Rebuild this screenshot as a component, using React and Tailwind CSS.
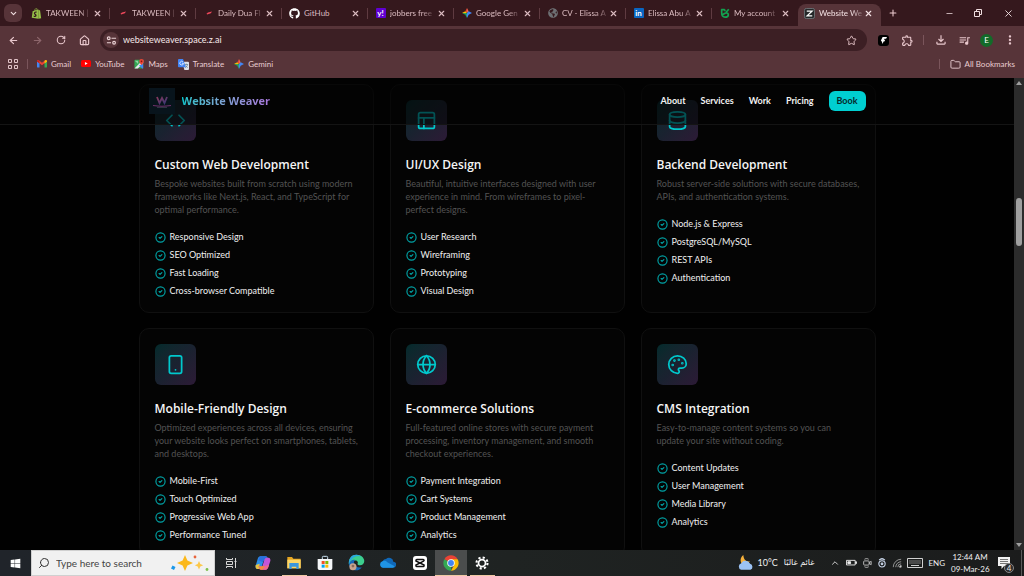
import {
  ArrowLeft,
  ArrowRight,
  ChevronDown,
  ChevronUp,
  CircleCheck,
  Code,
  Database,
  Folder,
  Globe,
  House,
  Minus,
  Palette,
  PanelsTopLeft,
  Plus,
  RotateCw,
  Search,
  Smartphone,
  Star,
  X,
} from 'lucide-react';
import { FaGithub, FaGlobeAmericas, FaShopify, FaWindows } from 'react-icons/fa';
import { MdOutlineExtension, MdOutlineFileDownload, MdOutlineQueueMusic, MdMoreVert } from 'react-icons/md';

/* ---------- small drawings ---------- */

const GeminiIcon = () => (
  <svg viewBox="0 0 24 24" className="size-[10px]">
    <path d="M12 0 8 8l4 4z" fill="#ea4335" />
    <path d="M12 0l4 8-4 4z" fill="#f0644c" />
    <path d="M0 12l8-4 4 4z" fill="#fbbc04" />
    <path d="M0 12l8 4 4-4z" fill="#34a853" />
    <path d="M12 24l-4-8 4-4z" fill="#1fa87a" />
    <path d="M12 24l4-8-4-4zM24 12l-8-4-4 4 4 4z" fill="#4285f4" />
  </svg>
);

const DashIcon = () => (
  <svg viewBox="0 0 10 10" className="size-[10px]">
    <path d="M2.500 5.800 4 4.400l4-.8-1.200 1.600-3.600 1.200z" fill="#f0485c" />
  </svg>
);

const AccountIcon = () => (
  <svg viewBox="0 0 24 24" className="size-[10px]" fill="none" stroke="#12a150" strokeWidth="4">
    <path d="M3 4h7l3 3M4 3v8c0 7 3 11 8 11 5 0 8-3 8-6s-3-5-6-4-5 3-8 4M14 11l7-8" />
  </svg>
);

const WeaverTabIcon = () => (
  <svg viewBox="0 0 12 12" className="size-[11px]">
    <rect x=".5" y=".5" width="11" height="11" rx="2" fill="#242829" stroke="#6f7578" />
    <path d="M3 3.400h5.800L3.400 8.600H9" stroke="#fff" strokeWidth="1.400" fill="none" />
  </svg>
);

const YahooIcon = () => (
  <span className="flex size-[10px] items-center justify-center rounded-[1px] bg-[#6001d2] text-[8px] leading-none font-bold text-white">
    y!
  </span>
);

const LinkedInIcon = () => (
  <span className="flex size-[10px] items-center justify-center rounded-[1px] bg-[#0a66c2] text-[8px] leading-none font-bold text-white">
    in
  </span>
);

const GmailIcon = () => (
  <svg viewBox="0 0 24 18" className="w-[10px]">
    <path d="M0 3v13a2 2 0 0 0 2 2h4V7z" fill="#4285f4" />
    <path d="M24 3v13a2 2 0 0 1-2 2h-4V7z" fill="#34a853" />
    <path d="M0 3c0-3 3-4 5-2l7 5.500 7-5.500c2-2 5-1 5 2l-6 5-6 4.500L6 8z" fill="#ea4335" />
    <path d="M18 2l1-1c2-2 5-1 5 2v1l-6 4.500z" fill="#fbbc04" />
    <path d="M0 3c0-1 1-3 2.500-3L6 2v6L0 4z" fill="#c5221f" />
  </svg>
);

const YouTubeIcon = () => (
  <svg viewBox="0 0 24 17" className="w-[10px]">
    <rect width="24" height="17" rx="4" fill="#f00" />
    <path d="m9.500 5 6.500 3.500L9.500 12z" fill="#fff" />
  </svg>
);

const MapsIcon = () => (
  <svg viewBox="0 0 24 24" className="size-[10px]">
    <rect x="1" y="2" width="21" height="21" rx="2" fill="#34a853" />
    <path d="M1 23 22 2v8L9 23z" fill="#e8eaed" />
    <path d="M12 15l8 8h2V12z" fill="#4285f4" />
    <path d="M2 4h8v8z" fill="#8fd3a4" />
    <path d="M18 0a5.500 5.500 0 0 0-5.500 5.500c0 4 5.500 9 5.500 9s5.500-5 5.500-9A5.500 5.500 0 0 0 18 0z" fill="#ea4335" />
    <circle cx="18" cy="5.500" r="2" fill="#811411" />
  </svg>
);

const TranslateIcon = () => (
  <svg viewBox="0 0 24 24" className="size-[11px]">
    <path d="M9 6h13a2 2 0 0 1 2 2v14a2 2 0 0 1-2 2h-8z" fill="#dfe3ea" />
    <path d="M14 12h8M18 10v2M21 12c-1 4-3 6-6 7M16 14l5 5" stroke="#607d8b" strokeWidth="1.500" fill="none" />
    <path d="M2 0h9l6 18H2a2 2 0 0 1-2-2V2a2 2 0 0 1 2-2z" fill="#4285f4" />
    <path d="M11 6.500A4 4 0 1 0 12 9.500H8.500" stroke="#fff" strokeWidth="1.600" fill="none" />
  </svg>
);

const AppsIcon = () => (
  <svg viewBox="0 0 10 10" className="size-[10px]" fill="none" stroke="#e0c3c7">
    <path d="M.5.5h3v3h-3zM6.500.5h3v3h-3zM.5 6.500h3v3h-3zM6.500 6.500h3v3h-3z" />
  </svg>
);

const TuneIcon = () => (
  <svg viewBox="0 0 12 12" className="size-[11px]" fill="none" stroke="#ead2d5" strokeWidth="1.200">
    <circle cx="3" cy="3.500" r="1.500" />
    <path d="M6 3.500h5M1 8.500h4.500" />
    <circle cx="8.800" cy="8.500" r="1.500" />
  </svg>
);

const RestoreIcon = () => (
  <svg viewBox="0 0 8 8" className="size-[8px]" fill="none" stroke="#f1dfe1">
    <path d="M.5 2.500h5v5h-5zM2.500 2V.500h5v5H6" />
  </svg>
);

const WeaverLogo = () => (
  <svg viewBox="0 0 26 26" className="size-[26px]">
    <defs>
      <linearGradient id="logoW" x1="0" y1="0" x2="1" y2="1">
        <stop offset="0" stopColor="#8a3a5c" />
        <stop offset="1" stopColor="#3b3675" />
      </linearGradient>
    </defs>
    <rect width="26" height="26" fill="#08141c" />
    <path d="M8 9l2.500 6 2.500-5 2.500 5L18 9" stroke="url(#logoW)" strokeWidth="1.800" fill="none" />
    <path d="M4 17.500c6 1 12 1 18 0" stroke="#70316b" strokeWidth="1.200" fill="none" />
    <path d="M8 19.500h10" stroke="#3a3d4d" strokeWidth=".8" />
  </svg>
);

const SparklesArt = () => (
  <svg viewBox="0 0 40 20" className="h-[20px] w-[40px]">
    <path d="M15 2l2.400 5.600L23 10l-5.600 2.400L15 18l-2.400-5.600L7 10l5.600-2.400z" fill="#fbb81c" />
    <path d="M29 8l1.300 2.900 2.900 1.300-2.900 1.300L29 16.400l-1.300-2.900-2.900-1.300 2.900-1.300z" fill="#fcc84a" />
    <path d="M2.500 12.500l3 1.500-1.500 3-3-1.500z" fill="#1b97e8" />
    <circle cx="25" cy="4" r="1.400" fill="#e8643c" />
    <circle cx="37" cy="16.500" r="1.400" fill="#7cc04b" />
  </svg>
);

const TaskViewIcon = () => (
  <svg viewBox="0 0 12 12" className="size-[12px]" fill="none" stroke="#d8d8d8">
    <path d="M1.500 1v1.500h6V1M1.500 4.500h6v3h-6zM1.500 11V9.500h6V11M10.500 1v10M9.500 4.500h2" />
  </svg>
);

const CopilotIcon = () => (
  <svg viewBox="0 0 24 24" className="size-[16px]">
    <path d="M8 2h8c2 0 2.500 1.500 3 3l1 3h-7l-3 10c-.6 2-1.500 3-3.500 3H4c-3 0-3.500-3-3-5L4 6c.6-2 2-4 4-4z" fill="#2a8fe8" />
    <path d="M5 8c1-4 2-6 4-6h7c2 0 2.500 1.500 3 3l1 3h-7l-1 3z" fill="#2b6fe0" />
    <path d="M1 15l6-2-1 8H4c-3 0-3.500-3-3-6z" fill="#e8c440" />
    <path d="M16 22H9c-2 0-2.500-1.500-3-3l-1-2h6l3-9.500C14.600 5.500 15.500 4 17.500 4H20c3 0 3.500 3 3 5l-3 9c-.6 2-2 4-4 4z" fill="#c455d8" />
    <path d="M5 17h6l4-1-3 6H9c-2 0-2.500-1.500-3-3z" fill="#f58a3c" />
    <path d="M12 22l3-6 6-1-1 3c-.6 2-2 4-4 4z" fill="#f0688c" />
  </svg>
);

const ExplorerIcon = () => (
  <svg viewBox="0 0 24 24" className="size-[16px]">
    <path d="M2 3h7l2 2.500h11V20H2z" fill="#e6a520" />
    <path d="M2 7h20v13H2z" fill="#fcd667" />
    <path d="M5 12h14v9h-3.500v-3.500h-7V21H5z" fill="#3a96dd" />
  </svg>
);

const StoreIcon = () => (
  <svg viewBox="0 0 24 24" className="size-[16px]">
    <path d="M8 6V3.500C8 2.500 8.500 2 9.500 2h5c1 0 1.500.5 1.500 1.500V6" fill="none" stroke="#cfe6f7" strokeWidth="1.500" />
    <path d="M1 6h22v14a2.500 2.500 0 0 1-2.500 2.500h-17A2.500 2.500 0 0 1 1 20z" fill="#f4f6f8" />
    <path d="M7 9h4.500v4.500H7z" fill="#f25022" />
    <path d="M12.500 9H17v4.500h-4.500z" fill="#7fba00" />
    <path d="M7 14.500h4.500V19H7z" fill="#00a4ef" />
    <path d="M12.500 14.500H17V19h-4.500z" fill="#ffb900" />
  </svg>
);

const EdgeIcon = () => (
  <svg viewBox="0 0 24 24" className="size-[17px]">
    <path d="M12 1c6 0 11 4 11 9 0 4-3 6-6 6-2.500 0-4-1-3.500-2.500 1-1.500.5-4.500-3.500-4.500-5 0-8 4-8.500 7C0 8 4 1 12 1z" fill="#3ccf8e" />
    <path d="M12 1c3 0 5 1 7 3-6-3-15 0-17.500 12C0 8 4 1 12 1z" fill="#2aa8e0" />
    <path d="M1.500 14C3 9 7 7.500 10 8.500c-3 2-3 12 9.500 10.500C17 22 14 23 12 23 6 23 1.500 19 1.500 14z" fill="#1668b8" />
    <circle cx="7" cy="18" r="5" fill="#c9a38e" />
    <circle cx="7" cy="17" r="2" fill="#8a6a5c" />
  </svg>
);

const OneDriveIcon = () => (
  <svg viewBox="0 0 24 16" className="w-[16px]">
    <path d="M9 3a6.500 6.500 0 0 1 11 4 4.500 4.500 0 0 1-.5 9H5A5 5 0 0 1 4 6.200 6 6 0 0 1 9 3z" fill="#1068b8" />
    <path d="M4 6.200c3-1 5 0 7 1.500L22 14a4 4 0 0 1-2.500 2H5A5 5 0 0 1 4 6.200z" fill="#1f93e4" />
  </svg>
);

const CapCutIcon = () => (
  <svg viewBox="0 0 24 24" className="size-[14px]">
    <rect width="24" height="24" rx="5" fill="#fff" />
    <path d="M19 8.500V7.500A1.500 1.500 0 0 0 17.500 6h-11A1.500 1.500 0 0 0 5 7.500v1l14 7v1a1.500 1.500 0 0 1-1.500 1.500h-11A1.500 1.500 0 0 1 5 16.500v-1l14-7" fill="none" stroke="#111" strokeWidth="2.400" />
  </svg>
);

const ChromeIcon = () => (
  <svg viewBox="0 0 24 24" className="size-[16px]">
    <path d="M12 12 2.050 6.250A11.500 11.500 0 0 1 21.950 6.250z" fill="#ea4335" />
    <path d="M2.050 6.250h0L12 12v11.500A11.500 11.500 0 0 1 2.050 6.250z" fill="#34a853" />
    <path d="M12 23.500 17 14.500 12 6.250h9.950A11.500 11.500 0 0 1 12 23.500z" fill="#fbbc05" />
    <circle cx="12" cy="12" r="5.600" fill="#fff" />
    <circle cx="12" cy="12" r="4.400" fill="#4285f4" />
  </svg>
);

const GearIcon = () => (
  <svg viewBox="0 0 24 24" className="size-[14px]" fill="none" stroke="#fff">
    <circle cx="12" cy="12" r="6" strokeWidth="3" />
    <circle cx="12" cy="12" r="9.500" strokeWidth="3.500" strokeDasharray="3.730 3.730" />
  </svg>
);

const WeatherIcon = () => (
  <svg viewBox="0 0 24 22" className="w-[17px]">
    <path d="M9 0c0 6 4 10 9 9-2 4-6 6-10 4S4 3 9 0z" fill="#f6b13c" />
    <path d="M6 21a5 5 0 0 1 0-9.500 7 7 0 0 1 12.500 1A4.500 4.500 0 0 1 19 21z" fill="#9cc3f5" />
  </svg>
);

const BatteryIcon = () => (
  <svg viewBox="0 0 12 8" className="w-[11px]">
    <path d="M.5 1.500h9.500v5H.500zM10.500 3h1v2h-1z" fill="none" stroke="#eee" />
    <path d="M2 3h3v2H2z" fill="#eee" stroke="#eee" />
  </svg>
);

const MeetNowIcon = () => (
  <svg viewBox="0 0 12 12" className="w-[10px]" fill="none" stroke="#d4d4d4">
    <path d="M3 1.500c1.500-1 3.500-1 5 0M3 10.500c1.500 1 3.500 1 5 0" />
    <rect x="2" y="3.500" width="6.500" height="5" rx="1" />
    <path d="M8.500 5.500 11 4v4L8.500 6.500" />
  </svg>
);

const HotspotIcon = () => (
  <svg viewBox="0 0 12 12" className="w-[10px]" fill="none" stroke="#cfdcf0" strokeWidth="1.300">
    <circle cx="6" cy="7" r="3.800" />
    <circle cx="6" cy="7" r="1" />
    <path d="M2.500 2.500C4.500.500 7.500.500 9.500 2.500" />
  </svg>
);

const WifiIcon = () => (
  <svg viewBox="0 0 12 12" className="w-[10px]" fill="none" stroke="#a9a9a9">
    <path d="M1.500 11A9.500 9.500 0 0 1 11 1.500M4.500 11A6.500 6.500 0 0 1 11 4.500M7 11a4 4 0 0 1 4-4" />
    <path d="M9 11a2 2 0 0 1 2-2v2z" fill="#fff" />
  </svg>
);

const KeyboardIcon = () => (
  <svg viewBox="0 0 16 10" className="w-[16px]" fill="none" stroke="#d0d0d0">
    <path d="M.5.500h15v9H.500z" />
    <path d="M2.500 3h11M2.500 5h11" strokeDasharray="1 1" />
    <path d="M4 7.500h8" />
  </svg>
);

const NoticeIcon = () => (
  <svg viewBox="0 0 12 12" className="w-[12px]">
    <path d="M0 0h12v9H6l-2.500 3V9H0z" fill="#f2f2f2" />
    <path d="M2 2.500h8M2 4.500h8M2 6.500h8" stroke="#555" strokeWidth=".8" />
  </svg>
);

/* ---------- data ---------- */

const tabs = [
  { title: 'TAKWEEN |', icon: <FaShopify className="size-[11px] text-[#95bf47]" /> },
  { title: 'TAKWEEN |', icon: <DashIcon /> },
  { title: 'Daily Dua Fl', icon: <DashIcon /> },
  { title: 'GitHub', icon: <FaGithub className="size-[11px] text-white" />, short: true },
  { title: 'jobbers free', icon: <YahooIcon /> },
  { title: 'Google Gen', icon: <GeminiIcon /> },
  { title: 'CV - Elissa A', icon: <FaGlobeAmericas className="size-[10px] text-[#6d6f73]" /> },
  { title: 'Elissa Abu A', icon: <LinkedInIcon /> },
  { title: 'My account', icon: <AccountIcon /> },
  { title: 'Website We', icon: <WeaverTabIcon />, active: true },
];

const bookmarks = [
  { name: 'Gmail', icon: <GmailIcon /> },
  { name: 'YouTube', icon: <YouTubeIcon /> },
  { name: 'Maps', icon: <MapsIcon /> },
  { name: 'Translate', icon: <TranslateIcon /> },
  { name: 'Gemini', icon: <GeminiIcon /> },
];

const services = [
  {
    title: 'Custom Web Development',
    icon: Code,
    text: 'Bespoke websites built from scratch using modern frameworks like Next.js, React, and TypeScript for optimal performance.',
    features: ['Responsive Design', 'SEO Optimized', 'Fast Loading', 'Cross-browser Compatible'],
  },
  {
    title: 'UI/UX Design',
    icon: PanelsTopLeft,
    text: 'Beautiful, intuitive interfaces designed with user experience in mind. From wireframes to pixel-perfect designs.',
    features: ['User Research', 'Wireframing', 'Prototyping', 'Visual Design'],
  },
  {
    title: 'Backend Development',
    icon: Database,
    text: 'Robust server-side solutions with secure databases, APIs, and authentication systems.',
    features: ['Node.js & Express', 'PostgreSQL/MySQL', 'REST APIs', 'Authentication'],
  },
  {
    title: 'Mobile-Friendly Design',
    icon: Smartphone,
    text: 'Optimized experiences across all devices, ensuring your website looks perfect on smartphones, tablets, and desktops.',
    features: ['Mobile-First', 'Touch Optimized', 'Progressive Web App', 'Performance Tuned'],
  },
  {
    title: 'E-commerce Solutions',
    icon: Globe,
    text: 'Full-featured online stores with secure payment processing, inventory management, and smooth checkout experiences.',
    features: ['Payment Integration', 'Cart Systems', 'Product Management', 'Analytics'],
  },
  {
    title: 'CMS Integration',
    icon: Palette,
    text: 'Easy-to-manage content systems so you can update your site without coding.',
    features: ['Content Updates', 'User Management', 'Media Library', 'Analytics'],
  },
];

const pinned = [
  { name: 'Copilot', icon: <CopilotIcon /> },
  { name: 'File Explorer', icon: <ExplorerIcon />, open: true },
  { name: 'Store', icon: <StoreIcon /> },
  { name: 'Edge', icon: <EdgeIcon /> },
  { name: 'OneDrive', icon: <OneDriveIcon /> },
  { name: 'CapCut', icon: <CapCutIcon /> },
  { name: 'Chrome', icon: <ChromeIcon />, open: true, active: true },
  { name: 'Settings', icon: <GearIcon />, open: true },
];

/* ---------- browser ---------- */

const Tab = ({ tab, separator }) => (
  <div
    className={
      tab.active
        ? 'mt-1 flex h-[22px] w-[83px] items-center rounded-t-lg bg-[#573439] pb-1 pl-[6px] text-[#f6e4e6]'
        : 'flex h-[26px] w-[86px] items-center pl-[7px] text-[#dcbcc1]'
    }
  >
    <button type="button" className="flex min-w-0 flex-1 items-center gap-1">
      <span className="flex w-[11px] shrink-0 justify-center">{tab.icon}</span>
      <span
        className={`text-left text-[8px] leading-3 whitespace-nowrap ${tab.short ? '' : '[mask-image:linear-gradient(to_right,black_75%,#0004)]'}`}
      >
        {tab.title}
      </span>
    </button>
    <button type="button" aria-label={`Close ${tab.title}`} className="mr-[7px]">
      <X className="size-[9px]" strokeWidth={3} />
    </button>
    {separator ? <span className="h-[11px] w-px bg-[#5f3b41]" /> : <span className="w-px" />}
  </div>
);

const TabStrip = () => (
  <div className="flex h-[26px] shrink-0 items-center bg-[#35181d]">
    <button
      type="button"
      aria-label="Search tabs"
      className="ml-1 flex h-[18px] w-[18px] shrink-0 items-center justify-center rounded-md bg-[#573439]"
    >
      <ChevronDown className="size-[9px] text-[#f1dfe1]" strokeWidth={3} />
    </button>
    <div className="ml-[2px] flex">
      {tabs.map((tab, i) => (
        <Tab key={i} tab={tab} separator={i < 8} />
      ))}
    </div>
    <button type="button" aria-label="New tab" className="ml-[7px]">
      <Plus className="size-[10px] text-[#f0cdd2]" strokeWidth={2.5} />
    </button>
    <div className="ml-auto flex w-[89px] items-center justify-around text-[#f1dfe1]">
      <button type="button" aria-label="Minimize">
        <Minus className="size-[9px]" />
      </button>
      <button type="button" aria-label="Restore">
        <RestoreIcon />
      </button>
      <button type="button" aria-label="Close">
        <X className="size-[11px]" />
      </button>
    </div>
  </div>
);

const Toolbar = () => (
  <div className="flex h-[28px] shrink-0 items-center bg-[#573439] text-[#e9c8cd]">
    <div className="flex w-[96px] shrink-0 items-center justify-around pl-[2px]">
      <button type="button" aria-label="Back">
        <ArrowLeft className="size-[11px]" strokeWidth={2.5} />
      </button>
      <button type="button" aria-label="Forward" disabled>
        <ArrowRight className="size-[11px] text-[#8d666c]" strokeWidth={2.5} />
      </button>
      <button type="button" aria-label="Reload">
        <RotateCw className="size-[10px]" strokeWidth={2.5} />
      </button>
      <button type="button" aria-label="Home">
        <House className="size-[11px]" strokeWidth={2.5} />
      </button>
    </div>
    <div className="ml-1 flex h-[22px] flex-1 items-center rounded-full bg-[#3c1f24] pr-[10px] pl-[3px]">
      <button
        type="button"
        aria-label="Site information"
        className="flex size-4 shrink-0 items-center justify-center rounded-full bg-[#573439]"
      >
        <TuneIcon />
      </button>
      <input
        aria-label="Address"
        defaultValue="websiteweaver.space.z.ai"
        className="ml-1 min-w-0 flex-1 bg-transparent text-[9px] text-[#f6e9ea] outline-none"
      />
      <button type="button" aria-label="Bookmark this page">
        <Star className="size-[11px]" />
      </button>
    </div>
    <div className="flex w-[157px] shrink-0 items-center pl-[11px]">
      <button
        type="button"
        aria-label="Extension"
        className="flex h-[11px] w-[11px] items-center justify-center rounded-[3px] bg-black"
      >
        <svg viewBox="0 0 8 8" className="size-[7px]" fill="#fff">
          <path d="M3 0h5L7 2H5L4.500 3H6L5 5H4L3 8 2 5l-1-1z" />
        </svg>
      </button>
      <button type="button" aria-label="Extensions" className="ml-3">
        <MdOutlineExtension className="size-[13px]" />
      </button>
      <span className="ml-[9px] h-[10px] w-px bg-[#7a555b]" />
      <button type="button" aria-label="Downloads" className="ml-[10px]">
        <MdOutlineFileDownload className="size-[14px]" />
      </button>
      <button type="button" aria-label="Media" className="ml-[10px]">
        <MdOutlineQueueMusic className="size-[13px]" />
      </button>
      <button
        type="button"
        aria-label="Profile"
        className="ml-[9px] flex size-[13px] items-center justify-center rounded-full bg-[#126b29] text-[8px] leading-none text-white"
      >
        E
      </button>
      <button type="button" aria-label="Menu" className="ml-[10px]">
        <MdMoreVert className="size-[14px]" />
      </button>
    </div>
  </div>
);

const BookmarksBar = () => (
  <div className="flex h-[24px] shrink-0 items-center bg-[#573439] pr-[9px] pb-1 pl-2 text-[8px] leading-3 text-[#e9cdd1]">
    <button type="button" aria-label="Apps">
      <AppsIcon />
    </button>
    <span className="mr-[9px] ml-[9px] h-[10px] w-px bg-[#7a555b]" />
    <div className="flex gap-[10px]">
      {bookmarks.map((item) => (
        <a key={item.name} href="#" className="flex items-center gap-1">
          {item.icon}
          {item.name}
        </a>
      ))}
    </div>
    <span className="mr-[10px] ml-auto h-[10px] w-px bg-[#7a555b]" />
    <button type="button" className="flex items-center gap-1">
      <Folder className="size-[11px]" />
      All Bookmarks
    </button>
  </div>
);

/* ---------- site ---------- */

const SiteHeader = () => (
  <header className="absolute inset-x-0 top-0 border-b border-[#141414] bg-[#030303]/60">
    <div className="mx-auto flex h-[46px] w-full max-w-[717px] items-center">
      <a href="#" className="flex items-center gap-[7px]">
        <WeaverLogo />
        <span className="bg-gradient-to-r from-[#00c4cc] to-[#a876dc] bg-clip-text font-['Open_Sans',sans-serif] text-[11px] leading-4 font-bold text-transparent">
          Website Weaver
        </span>
      </a>
      <nav className="ml-auto flex items-center gap-[15px] text-[9px] leading-3 font-bold text-[#f2f2f2]">
        <a href="#about">About</a>
        <a href="#services">Services</a>
        <a href="#work">Work</a>
        <a href="#pricing">Pricing</a>
        <button type="button" className="h-5 w-[37px] rounded-md bg-[#00cfd1] text-[#062a2c]">
          Book
        </button>
      </nav>
    </div>
  </header>
);

const ServiceCard = ({ service }) => {
  const Icon = service.icon;
  return (
    <article className="rounded-[10px] border border-[#101010] bg-[#040404] py-[15px] pr-[14px] pl-[15px]">
      <div className="flex size-[41px] items-center justify-center rounded-md bg-gradient-to-br from-[#032b2c] via-[#1a2230] to-[#2c1a36]">
        <Icon className="size-[21px] text-[#00c8cc]" />
      </div>
      <h3 className="mt-[14px] font-['Open_Sans',sans-serif] text-[12px] leading-5 font-semibold text-[#f5f5f5]">
        {service.title}
      </h3>
      <p className="mt-[2px] text-[9px] leading-[13px] text-[#535353]">{service.text}</p>
      <ul className="mt-[15px] space-y-[6px]">
        {service.features.map((feature) => (
          <li key={feature} className="flex items-center gap-1 text-[9px] leading-3 text-[#f0f0f0]">
            <CircleCheck className="size-[11px] text-[#00a3a6]" strokeWidth={2.5} />
            {feature}
          </li>
        ))}
      </ul>
    </article>
  );
};

const Scrollbar = () => (
  <div className="flex w-[10px] shrink-0 flex-col items-center bg-[#2b2b2b] py-[3px]">
    <svg viewBox="0 0 6 4" className="w-[6px]">
      <path d="M0 4l3-4 3 4z" fill="#9f9f9f" />
    </svg>
    <span className="flex-[113]" />
    <span className="w-[6px] flex-[48] rounded-full bg-[#9f9f9f]" />
    <span className="flex-[297]" />
    <svg viewBox="0 0 6 4" className="w-[6px]">
      <path d="M0 0l3 4 3-4z" fill="#9f9f9f" />
    </svg>
  </div>
);

/* ---------- taskbar ---------- */

const Taskbar = () => (
  <footer className="flex h-[26px] shrink-0 items-stretch bg-gradient-to-r from-[#20242a] via-[#1f2322] to-[#1b1c1c] text-[9px] text-[#f0f0f0]">
    <button type="button" aria-label="Start" className="flex w-[31px] shrink-0 items-center justify-center">
      <FaWindows className="size-[11px] text-white" />
    </button>
    <label className="flex w-[184px] shrink-0 items-center border border-[#d0d0d0] bg-[#f1f1f1] pr-1 pl-[6px]">
      <Search className="size-[12px] -scale-x-100 text-[#333]" />
      <input
        type="text"
        aria-label="Search"
        placeholder="Type here to search"
        className="ml-[6px] min-w-0 flex-1 bg-transparent text-[10px] outline-none placeholder:text-[#444]"
      />
      <SparklesArt />
    </label>
    <button type="button" aria-label="Task view" className="flex w-[32px] shrink-0 items-center justify-center">
      <TaskViewIcon />
    </button>
    <div className="grid w-[251px] shrink-0 grid-cols-8">
      {pinned.map((app) => (
        <button
          key={app.name}
          type="button"
          aria-label={app.name}
          className={`flex flex-col items-center ${app.active ? 'bg-[#4b4d4d]' : ''}`}
        >
          <span className="flex flex-1 items-center">{app.icon}</span>
          <span
            className={`h-px ${app.active ? 'w-full' : 'w-[25px]'} ${app.open ? 'bg-[#f0c9a4]' : 'bg-transparent'}`}
          />
        </button>
      ))}
    </div>
    <div className="ml-auto flex items-center">
      <WeatherIcon />
      <span className="ml-1">10°C</span>
      <span dir="rtl" lang="ar" className="ml-[6px] font-['DejaVu_Sans',sans-serif] text-[8px]">
        غائم غالبًا
      </span>
      <ChevronUp className="mr-[6px] ml-[16px] size-[10px]" />
      <div className="flex items-center gap-[5px]">
        <BatteryIcon />
        <MeetNowIcon />
        <HotspotIcon />
        <WifiIcon />
        <KeyboardIcon />
        <span className="text-[8px]">ENG</span>
      </div>
      <div className="ml-[6px] w-[38px] text-center text-[8px] leading-3 whitespace-nowrap">
        <div>12:44 AM</div>
        <div>09-Mar-26</div>
      </div>
      <button type="button" aria-label="Notifications" className="relative ml-[9px]">
        <NoticeIcon />
        <span className="absolute -right-1 -bottom-1 flex size-[10px] items-center justify-center rounded-full border border-[#888] bg-[#2b2b2b] text-[8px] leading-none">
          4
        </span>
      </button>
      <span className="mr-[2px] ml-[11px] h-[26px] w-px bg-[#5a5a5a]" />
    </div>
  </footer>
);

export default function App() {
  return (
    <div className="flex h-screen flex-col overflow-hidden bg-black font-['Lato','Open_Sans',sans-serif]">
      <TabStrip />
      <Toolbar />
      <BookmarksBar />
      <div className="flex min-h-0 flex-1">
        <main className="relative min-w-0 flex-1 overflow-hidden bg-[#010101]">
          <section className="mx-auto grid w-full max-w-[737px] grid-cols-3 gap-x-4 gap-y-[15px] pt-[6px]">
            {services.map((service) => (
              <ServiceCard key={service.title} service={service} />
            ))}
          </section>
          <SiteHeader />
        </main>
        <Scrollbar />
      </div>
      <Taskbar />
    </div>
  );
}
